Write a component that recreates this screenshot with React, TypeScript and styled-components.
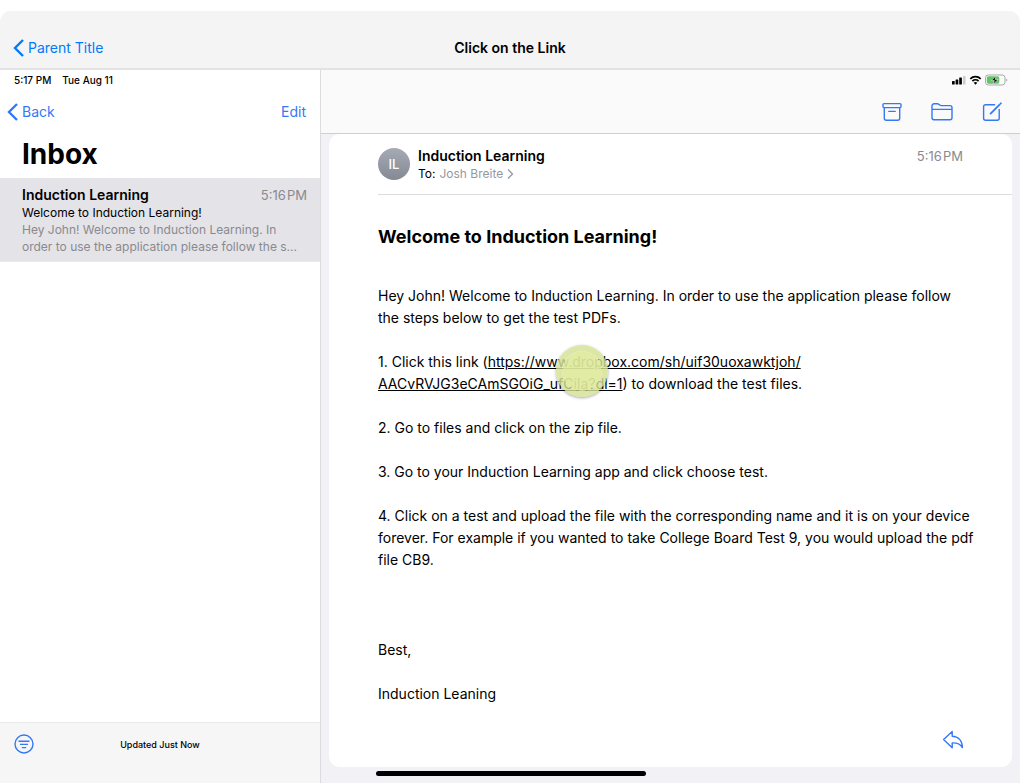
import React from "react";
import styled, { createGlobalStyle } from "styled-components";

const BLUE = "#3478f6";
const GREY = "#8a8a8e";

const GlobalStyle = createGlobalStyle`
  * { box-sizing: border-box; }
  body {
    margin: 0;
    background: #ffffff;
    color: #000000;
    font-family: Inter, "Liberation Sans", sans-serif;
    font-size: 14px;
  }
  h1, h2, h3, p { margin: 0; }
  button { border: 0; padding: 0; background: none; font: inherit; color: inherit; cursor: pointer; }
`;

const Page = styled.div`
  min-height: 100vh;
  padding: 11px 1px 0 0;
  display: flex;
  flex-direction: column;
`;

const TitleBar = styled.header`
  display: grid;
  grid-template-columns: 1fr auto 1fr;
  align-items: center;
  height: 59px;
  padding: 16px 13px 0;
  background: #f4f4f4;
  border-bottom: 2px solid #e2e2e2;
  border-radius: 11px 11px 0 0;
`;

const Title = styled.h1`
  font-size: 14px;
  line-height: 20px;
  font-weight: 600;
`;

const TextButton = styled.button<{ $color?: string }>`
  display: flex;
  align-items: center;
  justify-self: start;
  gap: 4px;
  height: 20px;
  line-height: 20px;
  color: ${(p) => p.$color ?? BLUE};
`;

const Device = styled.div`
  flex: 1;
  display: flex;
`;

const Sidebar = styled.aside`
  width: 321px;
  flex-shrink: 0;
  display: flex;
  flex-direction: column;
  border-right: 1px solid #dcdcdf;
`;

const StatusText = styled.div`
  display: flex;
  gap: 11px;
  height: 20px;
  padding: 0 14px;
  font-size: 10px;
  line-height: 20px;
  font-weight: 500;
`;

const NavRow = styled.div`
  display: flex;
  align-items: center;
  justify-content: space-between;
  height: 44px;
  padding: 0 14px 0 7px;
`;

const Heading = styled.h2`
  padding: 0 22px;
  height: 44px;
  font-size: 28px;
  line-height: 40px;
  font-weight: 700;
`;

const MailItem = styled.article`
  padding: 8px 13px 6px 22px;
  background: #e4e3e8;
  font-size: 12px;
  line-height: 17px;
  border-bottom: 1px solid #e9e9ec;
`;

const MailTop = styled.div`
  display: flex;
  justify-content: space-between;
`;

const Sender = styled.h3`
  font-size: 14px;
  line-height: 18px;
  font-weight: 600;
`;

const Time = styled.time`
  font-size: 13px;
  line-height: 18px;
  color: ${GREY};
`;

const Preview = styled.p`
  color: ${GREY};
`;

const SidebarFooter = styled.footer`
  display: grid;
  grid-template-columns: 1fr auto 1fr;
  align-items: center;
  height: 61px;
  margin-top: auto;
  padding: 0 14px 18px;
  background: #f6f6f6;
  border-top: 1px solid #e9e9e9;
  font-size: 9px;
  font-weight: 500;
`;

const IconButton = styled.button`
  display: flex;
  justify-self: start;
  color: ${BLUE};
`;

const Main = styled.main`
  flex: 1;
  min-width: 0;
  display: flex;
  flex-direction: column;
  background: #f2f1f6;
`;

const TopBar = styled.div`
  height: 64px;
  background: #fafafa;
  border-bottom: 1px solid #cfcfd2;
`;

const StatusIcons = styled.div`
  display: flex;
  justify-content: flex-end;
  height: 20px;
  align-items: center;
  padding-right: 12px;
`;

const Tools = styled.div`
  display: flex;
  justify-content: flex-end;
  align-items: center;
  gap: 28px;
  height: 44px;
  padding-right: 18px;
`;

const Card = styled.section`
  flex: 1;
  display: flex;
  flex-direction: column;
  margin: 0 8px;
  background: #ffffff;
  border-radius: 11px;
`;

const MessageHead = styled.div`
  display: flex;
  gap: 8px;
  height: 61px;
  margin-left: 49px;
  padding: 13px 49px 0 0;
  border-bottom: 1px solid #dcdcdf;
`;

const Avatar = styled.div`
  width: 32px;
  height: 32px;
  margin-top: 1px;
  border-radius: 50%;
  background: linear-gradient(#a5aab5, #858994);
  color: #ffffff;
  font-size: 13px;
  line-height: 32px;
  font-weight: 500;
  text-align: center;
`;

const Names = styled.div`
  flex: 1;
`;

const Recipient = styled.p`
  display: flex;
  align-items: center;
  gap: 4px;
  font-size: 12px;
  line-height: 17px;
`;

const Muted = styled.span`
  color: #98989c;
`;

const Body = styled.div`
  flex: 1;
  padding: 30px 30px 0 49px;
  line-height: 22px;
`;

const Subject = styled.h2`
  margin-bottom: 36px;
  font-size: 18px;
  line-height: 24px;
  font-weight: 700;
`;

const Paragraph = styled.p`
  position: relative;
  margin-bottom: 22px;
`;

const SignOff = styled.div`
  padding-top: 46px;
`;

const Link = styled.a`
  color: inherit;
  text-decoration: underline;
`;

const TouchPoint = styled.span`
  position: absolute;
  left: 178px;
  top: -6px;
  width: 52px;
  height: 52px;
  border: 6px solid rgba(212, 224, 146, 0.82);
  border-radius: 50%;
  background: rgba(222, 233, 156, 0.92);
  background-clip: padding-box;
  box-shadow: 0 1px 3px rgba(0, 0, 0, 0.35);
`;

const CardFooter = styled.div`
  display: flex;
  justify-content: flex-end;
  padding: 0 48px 17px;
`;

const HomeStrip = styled.div`
  height: 16px;
  padding: 4px 0 0 55px;
`;

const HomeBar = styled.div`
  width: 270px;
  height: 5px;
  border-radius: 3px;
  background: #000000;
`;

const BackChevron = () => (
  <svg width="11" height="18" viewBox="0 0 11 18" fill="none" stroke="currentColor" strokeWidth="2.4">
    <path d="M10 1 2 9l8 8" />
  </svg>
);

const FilterIcon = () => (
  <svg width="20" height="20" viewBox="0 0 20 20" fill="none" stroke="currentColor" strokeWidth="1.4">
    <circle cx="10" cy="10" r="9" />
    <path d="M4.5 7.2h11M6 10.4h8M7.8 13.6h4.4" />
  </svg>
);

const ArchiveIcon = () => (
  <svg width="20" height="20" viewBox="0 0 20 20" fill="none" stroke="currentColor" strokeWidth="1.4" strokeLinejoin="round" strokeLinecap="round">
    <rect x="1" y="1.6" width="18" height="4" rx="1" />
    <path d="M2.3 5.6v10.6a2 2 0 0 0 2 2h11.4a2 2 0 0 0 2-2V5.6M6.8 9.4h6.4" />
  </svg>
);

const FolderIcon = () => (
  <svg width="24" height="20" viewBox="0 0 24 20" fill="none" stroke="currentColor" strokeWidth="1.4" strokeLinejoin="round">
    <path d="M2 15.8V3.8a2 2 0 0 1 2-2h3.4c.8 0 1.2.3 1.7.7l.6.5c.5.4 1 .6 1.7.6H20a2 2 0 0 1 2 2v10.2a2 2 0 0 1-2 2H4a2 2 0 0 1-2-2zM2 7.4h20" />
  </svg>
);

const ComposeIcon = () => (
  <svg width="20" height="20" viewBox="0 0 20 20" fill="none" stroke="currentColor" strokeWidth="1.4" strokeLinecap="round">
    <path d="M12.6 2.7h-9a2 2 0 0 0-2 2v11.5a2 2 0 0 0 2 2h11.6a2 2 0 0 0 2-2V7.5" />
    <path d="M8.6 11.6 17.300 2.900M18.500 1.700l.4-.4" strokeWidth="1.800" />
  </svg>
);

const ReplyIcon = () => (
  <svg width="22" height="20" viewBox="0 0 22 20" fill="none" stroke="currentColor" strokeWidth="1.4" strokeLinejoin="round">
    <path d="M10.200 1.500 1.600 9.600l8.600 8.200v-4.900c4.600-.2 8 .9 10.200 4.700-.1-6.700-3.900-11-10.200-11.300z" />
  </svg>
);

const StatusGlyphs = () => (
  <svg width="56" height="12" viewBox="0 0 56 12" role="img" aria-label="Signal, Wi-Fi, battery charging">
    <rect x="0" y="7" width="2.7" height="3.5" rx=".5" />
    <rect x="3.6" y="5.5" width="2.7" height="5" rx=".5" />
    <rect x="7.2" y="3.5" width="2.7" height="7" rx=".5" />
    <rect x="11" y="2" width="2.5" height="8.5" rx=".5" fill="#cccccc" />
    <g fill="none" stroke="#000000" strokeWidth="1.7">
      <path d="M18.300 4.800a7.400 7.400 0 0 1 10.400 0M20.400 7.100a4.500 4.500 0 0 1 6.200 0" />
    </g>
    <path d="M23.500 10.700 21.700 8.800a2.600 2.600 0 0 1 3.600 0z" />
    <rect x="33.500" y="1" width="19.500" height="10" rx="2.800" fill="none" stroke="#a9a9a9" />
    <rect x="34.800" y="2.300" width="12.500" height="7.400" rx="1.600" fill="#62c466" />
    <path d="M54.300 4.400v3.200c1.500-.5 1.500-2.700 0-3.200z" fill="#a9a9a9" />
    <path d="m44.300 1.600-5 5h3l-1.300 3.800 5.200-5h-3.100z" stroke="#fafafa" strokeWidth=".6" />
  </svg>
);

export default function App() {
  return (
    <>
      <GlobalStyle />
      <Page>
        <TitleBar>
          <TextButton $color="#007aff">
            <BackChevron />
            Parent Title
          </TextButton>
          <Title>Click on the Link</Title>
        </TitleBar>
        <Device>
          <Sidebar>
            <StatusText>
              <span>5:17 PM</span>
              <span>Tue Aug 11</span>
            </StatusText>
            <NavRow>
              <TextButton>
                <BackChevron />
                Back
              </TextButton>
              <TextButton>Edit</TextButton>
            </NavRow>
            <Heading>Inbox</Heading>
            <MailItem>
              <MailTop>
                <Sender>Induction Learning</Sender>
                <Time>5:16{"\u200A"}PM</Time>
              </MailTop>
              <p>Welcome to Induction Learning!</p>
              <Preview>
                Hey John! Welcome to Induction Learning. In
                <br />
                order to use the application please follow the s...
              </Preview>
            </MailItem>
            <SidebarFooter>
              <IconButton aria-label="Filter">
                <FilterIcon />
              </IconButton>
              <span>Updated Just Now</span>
            </SidebarFooter>
          </Sidebar>
          <Main>
            <TopBar>
              <StatusIcons>
                <StatusGlyphs />
              </StatusIcons>
              <Tools>
                <IconButton aria-label="Archive">
                  <ArchiveIcon />
                </IconButton>
                <IconButton aria-label="Move to folder">
                  <FolderIcon />
                </IconButton>
                <IconButton aria-label="Compose">
                  <ComposeIcon />
                </IconButton>
              </Tools>
            </TopBar>
            <Card>
              <MessageHead>
                <Avatar>IL</Avatar>
                <Names>
                  <Sender>Induction Learning</Sender>
                  <Recipient>
                    To: <Muted>Josh Breite</Muted>
                    <svg width="7" height="10" viewBox="0 0 7 10" fill="none" stroke="#98989c" strokeWidth="1.3">
                      <path d="m1 .5 4.500 4.500L1 9.500" />
                    </svg>
                  </Recipient>
                </Names>
                <Time>5:16{"\u200A"}PM</Time>
              </MessageHead>
              <Body>
                <Subject>Welcome to Induction Learning!</Subject>
                <Paragraph>
                  Hey John! Welcome to Induction Learning. In order to use the application please follow
                  <br />
                  the steps below to get the test PDFs.
                </Paragraph>
                <Paragraph>
                  1. Click this link (
                  <Link href="#download">
                    https://www.dropbox.com/sh/uif30uoxawktjoh/
                    <br />
                    AACvRVJG3eCAmSGOiG_ufCiIa?dl=1
                  </Link>
                  ) to download the test files.
                  <TouchPoint />
                </Paragraph>
                <Paragraph>2. Go to files and click on the zip file.</Paragraph>
                <Paragraph>3. Go to your Induction Learning app and click choose test.</Paragraph>
                <Paragraph>
                  4. Click on a test and upload the file with the corresponding name and it is on your device
                  <br />
                  forever. For example if you wanted to take College Board Test 9, you would upload the pdf
                  <br />
                  file CB9.
                </Paragraph>
                <SignOff>
                  <Paragraph>Best,</Paragraph>
                  <Paragraph>Induction Leaning</Paragraph>
                </SignOff>
              </Body>
              <CardFooter>
                <IconButton aria-label="Reply">
                  <ReplyIcon />
                </IconButton>
              </CardFooter>
            </Card>
            <HomeStrip>
              <HomeBar />
            </HomeStrip>
          </Main>
        </Device>
      </Page>
    </>
  );
}
